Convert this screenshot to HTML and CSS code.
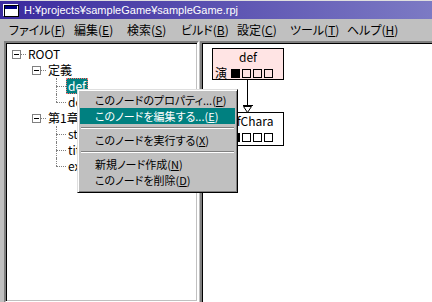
FILE: index.html
```html
<!DOCTYPE html>
<html lang="ja">
<head>
    <meta charset="UTF-8">
    <title>sampleGame.rpj</title>
    <link rel="stylesheet" href="styles.css">
</head>
<body>
    <div class="window">
        <div class="titlebar">
            <svg class="app-icon" width="16" height="13" viewBox="0 0 16 13">
                <rect x="0.5" y="0.5" width="14" height="11" fill="#c0c0c0" stroke="#fff"/>
                <rect x="1" y="1" width="14" height="11" fill="none" stroke="#000" stroke-width="1" transform="translate(0.5 0.5)"/>
                <rect x="2" y="2" width="12" height="3" fill="#000080"/>
                <rect x="2" y="5" width="12" height="6" fill="#fff"/>
            </svg>
            <span class="title-text">H:¥projects¥sampleGame¥sampleGame.rpj</span>
        </div>

        <div class="menubar">
            <span>ファイル(<u>F</u>)</span>
            <span>編集(<u>E</u>)</span>
            <span>検索(<u>S</u>)</span>
            <span>ビルド(<u>B</u>)</span>
            <span>設定(<u>C</u>)</span>
            <span>ツール(<u>T</u>)</span>
            <span>ヘルプ(<u>H</u>)</span>
        </div>

        <div class="main">
            <div class="tree">
                <div class="row"><span class="cell box"><i></i></span><span class="label">ROOT</span></div>
                <div class="row"><span class="cell"></span><span class="cell box"><i></i></span><span class="label">定義</span></div>
                <div class="row"><span class="cell"></span><span class="cell"></span><span class="cell tee"></span><span class="label selected">def</span></div>
                <div class="row"><span class="cell"></span><span class="cell"></span><span class="cell ell"></span><span class="label">defChara</span></div>
                <div class="row"><span class="cell"></span><span class="cell box"><i></i></span><span class="label">第1章</span></div>
                <div class="row"><span class="cell"></span><span class="cell"></span><span class="cell tee"></span><span class="label">start</span></div>
                <div class="row"><span class="cell"></span><span class="cell"></span><span class="cell tee"></span><span class="label">title</span></div>
                <div class="row"><span class="cell"></span><span class="cell"></span><span class="cell ell"></span><span class="label">exit</span></div>
            </div>

            <div class="canvas">
                <svg class="links" width="100" height="80">
                    <line x1="45.5" y1="37" x2="45.5" y2="62" stroke="#000"/>
                    <line x1="41" y1="62.5" x2="51" y2="62.5" stroke="#000"/>
                    <polygon points="41.5,63.5 49.5,63.5 45.5,69.5" fill="#fff" stroke="#000"/>
                </svg>
                <div class="node node-def">
                    <div class="node-title">def</div>
                    <div class="node-row">演<span class="sq on"></span><span class="sq"></span><span class="sq"></span><span class="sq"></span></div>
                </div>
                <div class="node node-chara">
                    <div class="node-title">defChara</div>
                    <div class="node-row">演<span class="sq on"></span><span class="sq"></span><span class="sq"></span><span class="sq"></span></div>
                </div>
            </div>
        </div>

        <div class="context-menu">
            <div class="item">このノードのプロパティ...(<u>P</u>)</div>
            <div class="item active">このノードを編集する...(<u>E</u>)</div>
            <div class="sep"></div>
            <div class="item">このノードを実行する(<u>X</u>)</div>
            <div class="sep"></div>
            <div class="item">新規ノード作成(<u>N</u>)</div>
            <div class="item">このノードを削除(<u>D</u>)</div>
        </div>
    </div>
</body>
</html>
```

FILE: styles.css
```css
body {
    margin: 0;
    background: #c0c0c0;
    font-family: "Noto Sans CJK JP", sans-serif;
    font-size: 12px;
    overflow: hidden;
}
.window {
    position: relative;
    width: 432px;
    height: 302px;
    border-top: 1px solid #dfdfdf;
    box-sizing: border-box;
    overflow: hidden;
}

/* title bar */
.titlebar {
    height: 18px;
    display: flex;
    align-items: center;
    gap: 5px;
    padding-left: 3px;
    background: linear-gradient(to right, #3a2a9e, #7c7ac4);
    color: #fff;
    font-family: "Liberation Sans", sans-serif;
    font-size: 11px;
}
.app-icon {
    flex: none;
}

/* menu bar */
.menubar {
    height: 21px;
    display: grid;
    grid-template-columns: 65px 53px 54px 56px 53px 57px auto;
    align-items: center;
    padding-left: 9px;
    font-feature-settings: "palt";
    line-height: 14px;
}
.menubar span {
    white-space: nowrap;
}

/* main area */
.main {
    display: flex;
    height: 262px;
    padding: 1px 0 0 4px;
}
.tree {
    width: 195px;
    flex: none;
    background: #fff;
    border: 2px solid;
    border-color: #808080 #fff #fff #808080;
    box-shadow: inset 1px 1px #000, inset -1px -1px #c0c0c0;
    padding-top: 3px;
    box-sizing: border-box;
}
.row {
    display: flex;
    height: 16px;
    align-items: center;
}
.cell {
    position: relative;
    width: 20px;
    height: 16px;
    flex: none;
}
.tee::before, .ell::before {
    content: "";
    position: absolute;
    left: 10px;
    top: 0;
    bottom: 0;
    border-left: 1px dotted #808080;
}
.ell::before {
    bottom: 8px;
}
.tee::after, .ell::after, .box::after {
    content: "";
    position: absolute;
    left: 10px;
    right: 0;
    top: 8px;
    border-top: 1px dotted #808080;
}
.box i {
    position: absolute;
    left: 6px;
    top: 4px;
    width: 9px;
    height: 9px;
    box-sizing: border-box;
    border: 1px solid #808080;
    background: #fff;
    z-index: 1;
}
.box i::after {
    content: "";
    position: absolute;
    left: 1px;
    top: 3px;
    width: 5px;
    height: 1px;
    background: #000;
}
.label {
    line-height: 14px;
    padding: 0 1px;
    border: 1px solid transparent;
    white-space: nowrap;
    font-size: 12px;
}
.label.selected {
    background: #008080;
    color: #fff;
    border: 1px dotted #ff7070;
}

/* node canvas */
.canvas {
    position: relative;
    flex: 1;
    margin-left: 1px;
    background: #fff;
    border-left: 2px solid #808080;
    border-top: 2px solid #808080;
    box-shadow: inset 1px 1px #000;
}
.links {
    position: absolute;
    left: 0;
    top: 0;
}
.node {
    position: absolute;
    left: 10px;
    width: 72px;
    height: 32px;
    box-sizing: border-box;
    border: 1px solid #000;
    padding: 1px 2px;
    font-size: 12px;
}
.node-def {
    top: 5px;
    background: #ffe4e4;
}
.node-chara {
    top: 69px;
    height: 34px;
    background: #fff;
}
.node-title {
    text-align: center;
    line-height: 14px;
}
.node-row {
    display: flex;
    align-items: center;
    margin-top: 2px;
    line-height: 14px;
}
.sq {
    width: 9px;
    height: 9px;
    box-sizing: border-box;
    border: 1px solid #000;
    margin-left: 2px;
}
.sq.on {
    margin-left: 4px;
    background: #000;
}

/* popup menu */
.context-menu {
    position: absolute;
    left: 77px;
    top: 88px;
    width: 161px;
    box-sizing: border-box;
    background: #c0c0c0;
    border: 1px solid;
    border-color: #dfdfdf #000 #000 #dfdfdf;
    box-shadow: inset 1px 1px #fff, inset -1px -1px #808080;
    padding: 2px 2px 4px;
    font-size: 11px;
    font-feature-settings: "palt";
}
.item {
    height: 16px;
    line-height: 16px;
    padding-left: 15px;
    white-space: nowrap;
}
.item.active {
    background: #008080;
    color: #fff;
}
.sep {
    margin: 3px 1px;
    border-top: 1px solid #808080;
    border-bottom: 1px solid #fff;
}
```
